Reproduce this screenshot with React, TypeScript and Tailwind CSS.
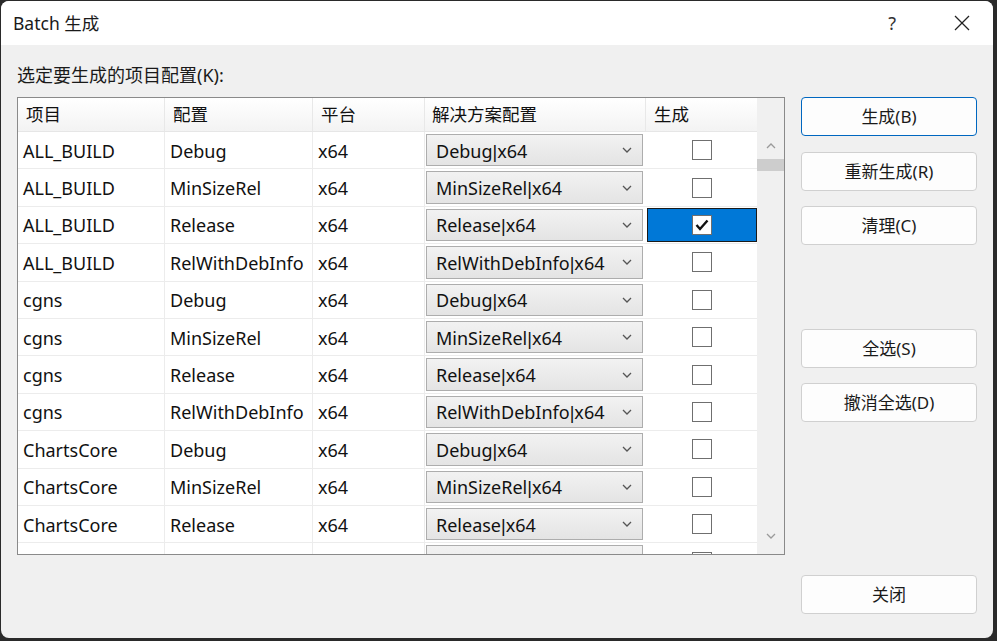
const FONT = { fontFamily: '"Noto Sans", "Noto Sans CJK SC", sans-serif' };
const PIPE_FONT = { fontFamily: '"Liberation Sans", sans-serif' };

type Row = { project: string; config: string; checked?: boolean; selected?: boolean };

const rows: Row[] = [
  { project: "ALL_BUILD", config: "Debug" },
  { project: "ALL_BUILD", config: "MinSizeRel" },
  { project: "ALL_BUILD", config: "Release", checked: true, selected: true },
  { project: "ALL_BUILD", config: "RelWithDebInfo" },
  { project: "cgns", config: "Debug" },
  { project: "cgns", config: "MinSizeRel" },
  { project: "cgns", config: "Release" },
  { project: "cgns", config: "RelWithDebInfo" },
  { project: "ChartsCore", config: "Debug" },
  { project: "ChartsCore", config: "MinSizeRel" },
  { project: "ChartsCore", config: "Release" },
];

function Chevron({ up = false, className = "" }: { up?: boolean; className?: string }) {
  return (
    <svg width="10" height="6" viewBox="0 0 10 6" className={className}>
      <polyline
        points={up ? "1,5 5,1 9,5" : "1,1 5,5 9,1"}
        fill="none"
        stroke="currentColor"
        strokeWidth="1.3"
      />
    </svg>
  );
}

function Checkbox({ checked }: { checked?: boolean }) {
  return (
    <div className="w-[20px] h-[20px] border border-[#6f6f6f] bg-white flex items-center justify-center">
      {checked && (
        <svg width="14" height="12" viewBox="0 0 14 12">
          <polyline points="1.5,6 5,10 12.5,1.5" fill="none" stroke="#111" strokeWidth="2.4" />
        </svg>
      )}
    </div>
  );
}

function DialogButton({ label, primary = false }: { label: string; primary?: boolean }) {
  return (
    <button
      className={`h-[39px] w-full rounded-[4px] bg-[#fdfdfd] text-[17px] text-[#1a1a1a] border ${
        primary ? "border-[#0067c0]" : "border-[#d0d0d0]"
      }`}
    >
      {label}
    </button>
  );
}

// the pipe in "Debug|x64" sits tight against its neighbours
function SolutionConfig({ config }: { config: string }) {
  return (
    <span>
      {config}
      <span style={PIPE_FONT}>|</span>
      x64
    </span>
  );
}

export default function App() {
  return (
    <div className="w-[997px] h-[641px] bg-[#2a2a2a] overflow-hidden" style={FONT}>
      <div className="ml-[1px] mt-[1px] w-[992px] h-[637px] rounded-[8px] overflow-hidden bg-[#f0f0f0] flex flex-col">
        {/* title bar */}
        <div className="h-[44px] bg-white flex items-center shrink-0">
          <span className="ml-[12px] text-[17.5px] text-[#1a1a1a]">Batch 生成</span>
          <span className="ml-auto mr-[58px] text-[18px] text-[#333]">?</span>
          <svg width="16" height="16" viewBox="0 0 16 16" className="mr-[23px]">
            <line x1="1" y1="1" x2="15" y2="15" stroke="#222" strokeWidth="1.2" />
            <line x1="15" y1="1" x2="1" y2="15" stroke="#222" strokeWidth="1.2" />
          </svg>
        </div>

        {/* body */}
        <div className="flex-1 px-[16px]">
          <div className="h-[52px] pt-[18px] text-[18px] leading-[24px] text-[#1a1a1a]">
            选定要生成的项目配置(K):
          </div>
          <div className="flex">
            {/* table */}
            <div className="w-[768px] h-[458px] border border-[#8a8a8a] bg-white flex overflow-hidden">
              <div className="w-[739px] flex flex-col">
                <div className="h-[34px] shrink-0 flex bg-gradient-to-b from-white to-[#f3f3f3] border-b border-[#e6e6e6] text-[17.5px] text-[#111]">
                  <div className="w-[147px] pl-[8px] flex items-center border-r border-[#e8e8e8]">项目</div>
                  <div className="w-[148px] pl-[8px] flex items-center border-r border-[#e8e8e8]">配置</div>
                  <div className="w-[112px] pl-[8px] flex items-center border-r border-[#e8e8e8]">平台</div>
                  <div className="w-[221px] pl-[7px] flex items-center border-r border-[#e8e8e8]">解决方案配置</div>
                  <div className="w-[111px] pl-[8px] flex items-center">生成</div>
                </div>
                {rows.map((r, i) => (
                  <div key={i} className="h-[37.4px] shrink-0 flex border-b border-[#ececec] text-[18px] text-[#111]">
                    <div className="w-[147px] pl-[5px] pt-[2px] flex items-center border-r border-[#ececec]">{r.project}</div>
                    <div className="w-[148px] pl-[5px] pt-[2px] flex items-center border-r border-[#ececec]">{r.config}</div>
                    <div className="w-[112px] pl-[5px] pt-[2px] flex items-center border-r border-[#ececec]">x64</div>
                    <div className="w-[221px] pl-[1px] pr-[3px] pt-[2px] pb-[2px]">
                      <div className="h-full border border-[#adadad] bg-gradient-to-b from-[#f2f2f2] to-[#e4e4e4] flex items-center pl-[9px] pr-[10px]">
                        <span className="pt-[3px]">
                          <SolutionConfig config={r.config} />
                        </span>
                        <Chevron className="ml-auto text-[#555]" />
                      </div>
                    </div>
                    <div className="w-[111px] pl-[1px] py-[1px] flex">
                      <div
                        className={`flex-1 flex items-center justify-center ${
                          r.selected ? "bg-[#0078d7] border border-[#1a1a1a]" : ""
                        }`}
                      >
                        <Checkbox checked={r.checked} />
                      </div>
                    </div>
                  </div>
                ))}
                {/* partially visible row below the fold */}
                <div className="h-[37.4px] shrink-0 flex">
                  <div className="w-[147px] border-r border-[#ececec]" />
                  <div className="w-[148px] border-r border-[#ececec]" />
                  <div className="w-[112px] border-r border-[#ececec]" />
                  <div className="w-[221px] pl-[1px] pr-[3px] pt-[2px] pb-[2px]">
                    <div className="h-full border border-[#adadad] bg-gradient-to-b from-[#f2f2f2] to-[#e4e4e4]" />
                  </div>
                  <div className="w-[111px] flex items-center justify-center">
                    <Checkbox />
                  </div>
                </div>
              </div>
              {/* scrollbar */}
              <div className="w-[27px] bg-[#f0f0f0] flex flex-col items-center">
                <div className="h-[34px] shrink-0" />
                <div className="h-[27px] flex items-center justify-center text-[#9a9a9a]">
                  <Chevron up />
                </div>
                <div className="h-[12px] w-full bg-[#cdcdcd]" />
                <div className="flex-1" />
                <div className="h-[28px] flex items-start pt-[7px] justify-center text-[#9a9a9a]">
                  <Chevron />
                </div>
              </div>
            </div>

            {/* buttons */}
            <div className="ml-[16px] w-[176px] flex flex-col">
              <DialogButton label="生成(B)" primary />
              <div className="h-[16px]" />
              <DialogButton label="重新生成(R)" />
              <div className="h-[15px]" />
              <DialogButton label="清理(C)" />
              <div className="h-[84px]" />
              <DialogButton label="全选(S)" />
              <div className="h-[15px]" />
              <DialogButton label="撤消全选(D)" />
              <div className="h-[153px]" />
              <DialogButton label="关闭" />
            </div>
          </div>
        </div>
      </div>
    </div>
  );
}
